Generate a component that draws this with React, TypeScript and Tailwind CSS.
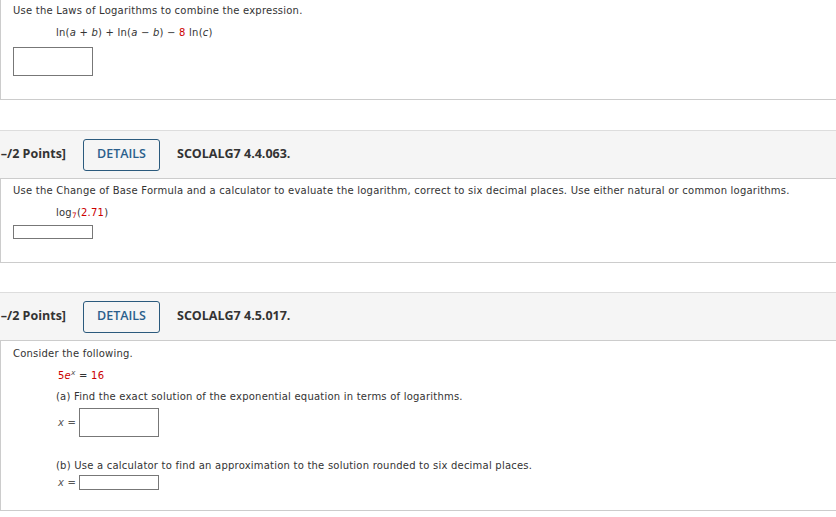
import React from "react";

const body = "font-['DejaVu_Sans',Verdana,sans-serif] text-[10px] tracking-[0.22px] text-[#333]";

function Header({ code }: { code: string }) {
  return (
    <div className="flex h-[48px] items-center border-t border-[#ddd] bg-[#f5f5f5] font-['Open_Sans',sans-serif] tracking-normal">
      <span className="w-[66px] shrink-0 overflow-hidden whitespace-nowrap text-right text-[12.5px] font-bold text-[#333]">
        –/2 Points]
      </span>
      <button className="ml-[17px] h-[32px] w-[77px] rounded-[3px] border border-[#2b5a7d] text-[12.5px] font-semibold text-[#2b5f8c]">
        DETAILS
      </button>
      <span className="ml-[17px] text-[12.5px] font-bold text-[#333]">{code}</span>
    </div>
  );
}

function Box({ className }: { className: string }) {
  return <div className={"border border-[#777] bg-white " + className} />;
}

export default function App() {
  return (
    <div className={"min-h-screen w-full overflow-hidden bg-white " + body}>
      {/* first question, top cut off */}
      <div className="h-[100px] border-b border-l border-[#ccc] pl-3 pt-[4px]">
        <p className="leading-[14px]">Use the Laws of Logarithms to combine the expression.</p>
        <p className="ml-[43px] mt-[8px] leading-[14px]">
          ln(<i>a</i> + <i>b</i>) + ln(<i>a</i> − <i>b</i>) − <span className="text-[#c00]">8</span> ln(<i>c</i>)
        </p>
        <Box className="mt-[7px] h-[29px] w-[80px]" />
      </div>

      <div className="h-[30px]" />

      <Header code="SCOLALG7 4.4.063." />
      <div className="h-[85px] border-y border-l border-[#ccc] pl-3 pt-[5px]">
        <p className="leading-[14px]">
          Use the Change of Base Formula and a calculator to evaluate the logarithm, correct to six decimal places. Use either natural or common logarithms.
        </p>
        <p className="ml-[43px] mt-[8px] leading-[14px]">
          log<sub className="text-[#c00]">7</sub>(<span className="text-[#c00]">2.71</span>)
        </p>
        <Box className="mt-[5px] h-[14px] w-[80px]" />
      </div>

      <div className="h-[29px]" />

      <Header code="SCOLALG7 4.5.017." />
      <div className="h-[171px] border-y border-l border-[#ccc] pl-3 pt-[6px]">
        <p className="leading-[14px]">Consider the following.</p>
        <p className="ml-[45px] mt-[8px] leading-[14px]">
          <span className="text-[#c00]">
            5<i>e</i>
          </span>
          <sup className="text-[#555]">
            <i>x</i>
          </sup>{" "}
          = <span className="text-[#c00]">16</span>
        </p>
        <p className="ml-[43px] mt-[7px] leading-[14px]">
          (a) Find the exact solution of the exponential equation in terms of logarithms.
        </p>
        <div className="ml-[45px] mt-[4px] flex items-center gap-[3px]">
          <span className="text-[#555]">
            <i>x</i> =
          </span>
          <Box className="h-[29px] w-[80px]" />
        </div>
        <p className="ml-[43px] mt-[22px] leading-[14px]">
          (b) Use a calculator to find an approximation to the solution rounded to six decimal places.
        </p>
        <div className="ml-[45px] mt-[2px] flex items-center gap-[3px]">
          <span className="text-[#555]">
            <i>x</i> =
          </span>
          <Box className="h-[15px] w-[80px]" />
        </div>
      </div>
    </div>
  );
}
